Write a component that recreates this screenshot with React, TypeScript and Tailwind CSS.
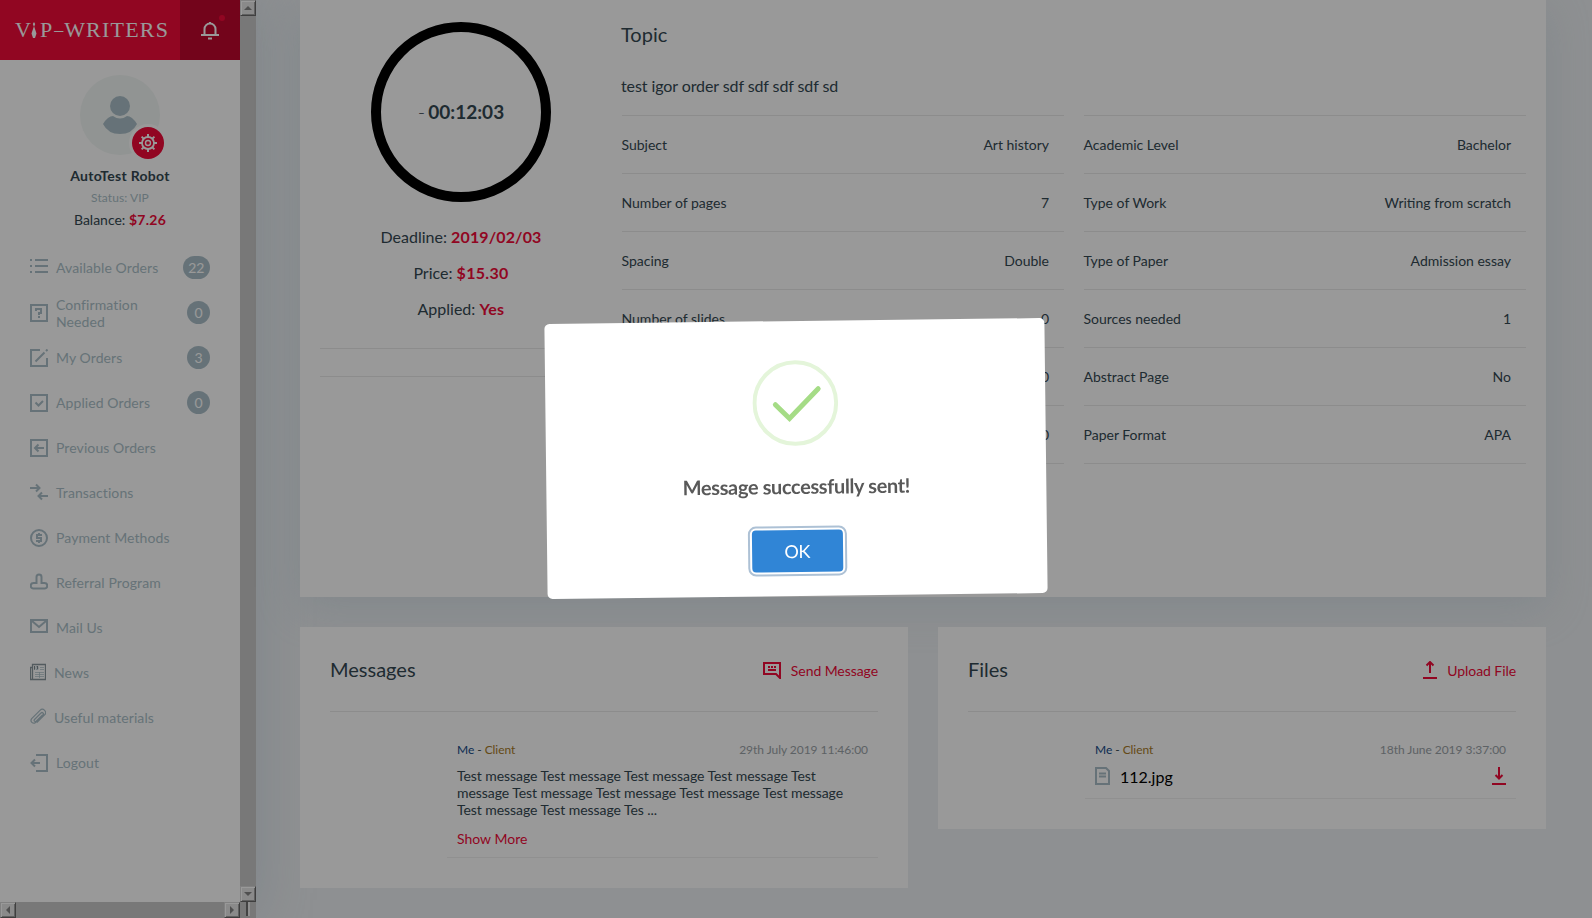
import type { ReactNode } from "react";

type IconProps = { children: ReactNode; w?: number; h?: number; className?: string };

function Icon({ children, w = 18, h = 18, className = "" }: IconProps) {
  return (
    <svg
      width={w}
      height={h}
      viewBox={`0 0 ${w} ${h}`}
      fill="none"
      stroke="currentColor"
      strokeWidth="2"
      className={`shrink-0 ${className}`}
    >
      {children}
    </svg>
  );
}

const icons = {
  list: (
    <Icon className="-translate-y-0.5">
      <path d="M0 3h2M5 3h13M0 9h2M5 9h13M0 15h2M5 15h13" />
    </Icon>
  ),
  question: (
    <Icon>
      <rect x="1" y="1" width="16" height="16" />
      <path d="M6 7V5h5v4H9v2M8 13h2" />
    </Icon>
  ),
  edit: (
    <Icon>
      <path d="M10 1H1v16h16V9M5.500 12.500l9-9M16 2l1.500-1.500" />
    </Icon>
  ),
  check: (
    <Icon>
      <rect x="1" y="1" width="16" height="16" />
      <path d="M5.500 8.500l3 3 4.500-4.500" />
    </Icon>
  ),
  back: (
    <Icon>
      <rect x="1" y="1" width="16" height="16" />
      <path d="M14 9H5.500M8.500 5.500L5 9l3.500 3.500" />
    </Icon>
  ),
  arrows: (
    <Icon className="-translate-y-px">
      <path d="M0 5h9M6 1.500L9.500 5 6 8.500M18 13H9M12 9.500L8.500 13l3.500 3.500" />
    </Icon>
  ),
  dollar: (
    <Icon>
      <circle cx="9" cy="9" r="8" />
      <path d="M12 6H7v3h4v3H6M9 4v2M9 12v2" />
    </Icon>
  ),
  stamp: (
    <Icon className="-translate-y-px">
      <path d="M6.500 10V4a2.500 2.500 0 0 1 5 0v6h3a2.500 2.500 0 0 1 0 5.500h-11a2.500 2.500 0 0 1 0-5.500h4" />
    </Icon>
  ),
  mail: (
    <Icon className="-translate-y-0.5">
      <rect x="1" y="3" width="16" height="12" />
      <path d="M2 4l7 6 7-6" />
    </Icon>
  ),
  news: (
    <Icon w={16} h={18} className="-translate-y-px">
      <g strokeWidth="1">
        <path d="M2.500 1.500h13v15h-13zM2.500 4.500h-2v12h2" stroke="#8b989e" strokeWidth="1.300" />
        <path d="M4.500 3v4M6 3.500h2v3H6zM10 4.500h4M10 6.500h4M5 9.500h9M5 11.500h9M5 13.500h9M9.500 9v6" opacity=".7" />
        <path d="M4.500 3v3.500M7.500 3v3" stroke="#7d898f" />
      </g>
    </Icon>
  ),
  clip: (
    <Icon w={16} h={18} className="-translate-y-px">
      <path
        strokeWidth="1.200"
        d="M4.500 11.500l6.500-6.500a1.400 1.400 0 0 1 2 2l-7.500 7.500a2.700 2.700 0 0 1-3.800-3.800L10 2.300a3.200 3.200 0 0 1 4.600 4.600l-7.800 7.800M4.500 11.500a1.200 1.200 0 0 0 1.700 1.700L12.500 7"
      />
    </Icon>
  ),
  logout: (
    <Icon>
      <path d="M6 1h11v16H6M10 9H1.500M5 5.500L1.500 9 5 12.500" />
    </Icon>
  ),
};

const menu: { icon: ReactNode; label: string; count?: number }[] = [
  { icon: icons.list, label: "Available Orders", count: 22 },
  { icon: icons.question, label: "Confirmation Needed", count: 0 },
  { icon: icons.edit, label: "My Orders", count: 3 },
  { icon: icons.check, label: "Applied Orders", count: 0 },
  { icon: icons.back, label: "Previous Orders" },
  { icon: icons.arrows, label: "Transactions" },
  { icon: icons.dollar, label: "Payment Methods" },
  { icon: icons.stamp, label: "Referral Program" },
  { icon: icons.mail, label: "Mail Us" },
  { icon: icons.news, label: "News" },
  { icon: icons.clip, label: "Useful materials" },
  { icon: icons.logout, label: "Logout" },
];

function ScrollButton({ d }: { d: string }) {
  return (
    <div className="flex size-4 shrink-0 items-center justify-center border border-t-[#d8d8d8] border-r-[#6a6a6a] border-b-[#6a6a6a] border-l-[#d8d8d8] bg-[#e6e6e6] shadow-[inset_1px_1px_0_#ffffff,inset_-1px_-1px_0_#a0a0a0]">
      <svg width="8" height="8" viewBox="0 0 8 8" fill="#868686">
        <path d={d} />
      </svg>
    </div>
  );
}

function Sidebar() {
  return (
    <aside className="flex h-[918px] w-64 shrink-0 flex-col bg-white shadow-[0_0_50px_rgba(170,195,210,0.4)]">
      <div className="flex h-[902px]">
        <div className="w-60">
          <div className="flex h-[60px] bg-[#f20a39] text-white">
            <div className="flex w-[180px] items-center pl-[15px] font-['Liberation_Serif',serif] text-[22px] leading-none">
              <span>V</span>
              <svg width="6" height="16" viewBox="0 0 6 16" fill="#fff" className="mr-[3px]">
                <path d="M3 0l1.200 2L3 5 1.800 2zM3 4l2.500 7.500L4 16H2L.500 11.500z" />
              </svg>
              <span>P</span>
              <span className="mr-px ml-0.5 text-[18px]">–</span>
              <span className="tracking-[1.200px]">WRITERS</span>
            </div>
            <div className="flex w-[60px] items-center justify-center bg-[#c0082d]">
              <div className="relative mt-0.5 h-[18px] w-[18px]">
                <svg width="18" height="18" viewBox="0 0 18 18" fill="none" stroke="#fff" strokeWidth="2">
                  <path d="M0 13h18M3.500 13V7a5.500 5.500 0 0 1 11 0v6M9 0v2M7 16.500h4" />
                </svg>
                <span className="absolute -top-[7px] left-[18px] size-1.5 rounded-full bg-[#f20a39]" />
              </div>
            </div>
          </div>
          <div className="flex flex-col items-center pt-[15px] text-[#344852]">
            <div className="relative size-20 rounded-full bg-[#f2f7f5]">
              <svg width="80" height="80" viewBox="0 0 80 80" fill="#abbfc8">
                <circle cx="40" cy="31" r="10" />
                <path d="M33 41q7 5 14 0q5 0 10 8q-5 10-17 10t-17-10q5-8 10-8z" />
              </svg>
              <div className="absolute top-[52px] left-[52px] flex size-8 items-center justify-center rounded-full bg-[#f20a39] shadow-[0_0_0_3px_#fff]">
                <svg width="18" height="18" viewBox="0 0 18 18" fill="none" stroke="#fff">
                  <circle cx="9" cy="9" r="6" strokeWidth="1.800" />
                  <circle cx="9" cy="9" r="2.500" strokeWidth="1.400" />
                  <path d="M9 0v3M9 15v3M0 9h3M15 9h3M2.600 2.600l2 2M13.400 13.400l2 2M2.600 15.400l2-2M13.400 4.600l2-2" strokeWidth="2" />
                </svg>
              </div>
            </div>
            <div className="mt-3 text-sm leading-[18px] font-bold tracking-[0.280px]">AutoTest Robot</div>
            <div className="mt-1 text-xs leading-[18px] tracking-[0.080px] text-[#abbfc8]">Status: VIP</div>
            <div className="mt-1 text-sm leading-[18px]">
              Balance: <b className="tracking-[0.250px] text-[#f20a39]">$7.26</b>
            </div>
          </div>
          <nav className="mt-[16px]">
            {menu.map((m) => (
              <div key={m.label} className="flex h-[45px] items-center pr-[30px] pl-[30px] text-sm leading-[17px] text-[#abbfc8]">
                {m.icon}
                <span className="ml-2 w-[120px] tracking-[0.090px]">{m.label}</span>
                {m.count !== undefined && (
                  <span className="ml-auto flex h-[23px] min-w-[23px] items-center justify-center rounded-full bg-[#abbfc8] px-[5.500px] text-white">
                    {m.count}
                  </span>
                )}
              </div>
            ))}
          </nav>
        </div>
        <div className="flex w-4 flex-col justify-between bg-[#c8c8c8]">
          <ScrollButton d="M0 6l4-4 4 4z" />
          <ScrollButton d="M0 2l4 4 4-4z" />
        </div>
      </div>
      <div className="flex h-4 bg-[#c8c8c8]">
        <ScrollButton d="M6 0L2 4l4 4z" />
        <div className="w-52" />
        <ScrollButton d="M2 0l4 4-4 4z" />
        <div className="ml-1.5 h-[14px] w-1 border-r-2 border-l-2 border-r-[#f0f0f0] border-l-[#707070]" />
      </div>
    </aside>
  );
}

function Details({ rows }: { rows: [string, string][] }) {
  return (
    <div className="border-t border-[#e9e9e9]">
      {rows.map(([k, v]) => (
        <div key={k} className="flex h-[58px] items-center justify-between border-b border-[#e9e9e9] pr-[15px] text-sm leading-5">
          <span className="-ml-[0.500px]">{k}</span>
          <span>{v}</span>
        </div>
      ))}
    </div>
  );
}

const leftRows: [string, string][] = [
  ["Subject", "Art history"],
  ["Number of pages", "7"],
  ["Spacing", "Double"],
  ["Number of slides", "0"],
  ["Number of charts", "0"],
  ["Number of problems", "0"],
];
const rightRows: [string, string][] = [
  ["Academic Level", "Bachelor"],
  ["Type of Work", "Writing from scratch"],
  ["Type of Paper", "Admission essay"],
  ["Sources needed", "1"],
  ["Abstract Page", "No"],
  ["Paper Format", "APA"],
];

function OrderCard() {
  return (
    <section className="flex h-[597px] bg-white pl-5 shadow-[0_10px_40px_rgba(170,195,210,0.3)]">
      <div className="flex w-[282px] flex-col items-center pt-[22px]">
        <div className="flex size-[180px] items-center justify-center rounded-full border-[10px] border-black pb-px text-xl leading-6">
          <span>
            <span className="font-light">-</span>
            <b className="ml-[3px] text-[19px]">00:12:03</b>
          </span>
        </div>
        <div className="mt-[17px] text-center text-base leading-9">
          <p>
            Deadline: <b className="tracking-[0.120px] text-[#f20a39]">2019/02/03</b>
          </p>
          <p>
            Price: <b className="tracking-[0.300px] text-[#f20a39]">$15.30</b>
          </p>
          <p>
            Applied: <b className="tracking-[0.300px] text-[#f20a39]">Yes</b>
          </p>
        </div>
        <div className="mt-[21px] h-[29px] w-full border-y border-[#e9e9e9]" />
      </div>
      <div className="ml-5 w-[904px]">
        <h2 className="-ml-px pt-[22px] text-xl leading-6">Topic</h2>
        <p className="mt-[28px] -ml-px text-base leading-6 tracking-[-0.090px]">test igor order sdf sdf sdf sdf sd</p>
        <div className="mt-[17px] grid grid-cols-2 gap-5">
          <Details rows={leftRows} />
          <Details rows={rightRows} />
        </div>
      </div>
    </section>
  );
}

function CardHead({ title, icon, action }: { title: string; icon: ReactNode; action: string }) {
  return (
    <div className="flex h-[85px] items-center justify-between border-b border-[#e9e9e9]">
      <h2 className="text-xl leading-6">{title}</h2>
      <div className="mt-0.5 flex items-center gap-2.5 text-sm text-[#f20a39]">
        {icon}
        <span className="mt-0.5 tracking-[-0.070px]">{action}</span>
      </div>
    </div>
  );
}

function EntryHead({ date }: { date: string }) {
  return (
    <div className="flex justify-between text-xs leading-4">
      <span className="tracking-[-0.060px]">
        <span className="text-[#144a88]">Me</span> - <span className="text-[#a87b28]">Client</span>
      </span>
      <span className="tracking-[-0.040px] text-[#9ba3a8]">{date}</span>
    </div>
  );
}

function Modal() {
  return (
    <div className="fixed inset-0 z-20 bg-black/40">
      <div className="absolute top-[321px] left-[545.500px] flex h-[275px] w-[500px] rotate-[-0.680deg] flex-col items-center rounded-[5px] bg-white pt-[38.500px]">
        <svg width="86" height="86" viewBox="0 0 86 86" fill="none">
          <circle cx="43" cy="43" r="40.800" stroke="#e4f5da" strokeWidth="4" />
          <path d="M23 44.500l14 14L66 29" stroke="#a5dc86" strokeWidth="5" strokeLinecap="round" />
        </svg>
        <div className="mt-[28px] text-xl leading-6 font-bold tracking-[-0.380px] text-[#595959]">Message successfully sent!</div>
        <button className="mt-[32px] flex h-[42px] w-[91px] items-center justify-center rounded-[4px] bg-[#3085d6] text-lg tracking-[-0.500px] text-white shadow-[0_0_0_2px_#fff,0_0_0_4px_rgba(50,100,150,0.4)]">
          OK
        </button>
      </div>
    </div>
  );
}

export default function App() {
  return (
    <div className="flex h-[918px] w-[1592px] overflow-hidden bg-[#edf0f3] font-['Lato',sans-serif] text-[#344852]">
      <Sidebar />
      <main className="relative z-10 ml-11 w-[1246px]">
        <OrderCard />
        <div className="relative mt-[30px] flex items-start gap-[30px]">
          <section className="h-[261px] w-[608px] bg-white px-[30px]">
            <CardHead
              title="Messages"
              action="Send Message"
              icon={
                <Icon>
                  <path d="M17 17V2H1v11h12z" />
                  <path d="M5 6h2M8 6h2M11 6h2M5 9h8" />
                </Icon>
              }
            />
            <div className="mt-[22px] ml-[117px] h-[124px] border-b border-[#f0f0f0] px-2.5 pt-[8px]">
              <EntryHead date="29th July 2019 11:46:00" />
              <p className="mt-[9px] w-[400px] text-sm leading-[17px] tracking-[-0.065px]">
                Test message Test message Test message Test message Test message Test message Test message Test message
                Test message Test message Test message Tes ...
              </p>
              <p className="mt-3 text-sm leading-[17px] text-[#f20a39]">Show More</p>
            </div>
          </section>
          <section className="h-[202px] w-[608px] bg-white px-[30px]">
            <CardHead
              title="Files"
              action="Upload File"
              icon={
                <Icon w={14}>
                  <path d="M0 17h14M7 12V1.500M3.500 4.500L7 1l3.500 3.500" />
                </Icon>
              }
            />
            <div className="mt-[22px] ml-[117px] h-[65px] border-b border-[#f0f0f0] px-2.5 pt-[8px]">
              <EntryHead date="18th June 2019 3:37:00" />
              <div className="mt-[9px] flex h-[18px] items-center text-base leading-[18px] text-black">
                <Icon w={15} className="text-[#abbfc8]">
                  <path d="M1 1h10l3 3v13H1zM4 6.500h7M4 9.500h7" />
                </Icon>
                <span className="mt-px ml-[10px]">112.jpg</span>
                <Icon w={14} className="ml-auto text-[#f20a39]">
                  <path d="M0 17h14M7 0v11M3.500 8L7 11.500 10.500 8" />
                </Icon>
              </div>
            </div>
          </section>
        </div>
      </main>
      <Modal />
    </div>
  );
}
